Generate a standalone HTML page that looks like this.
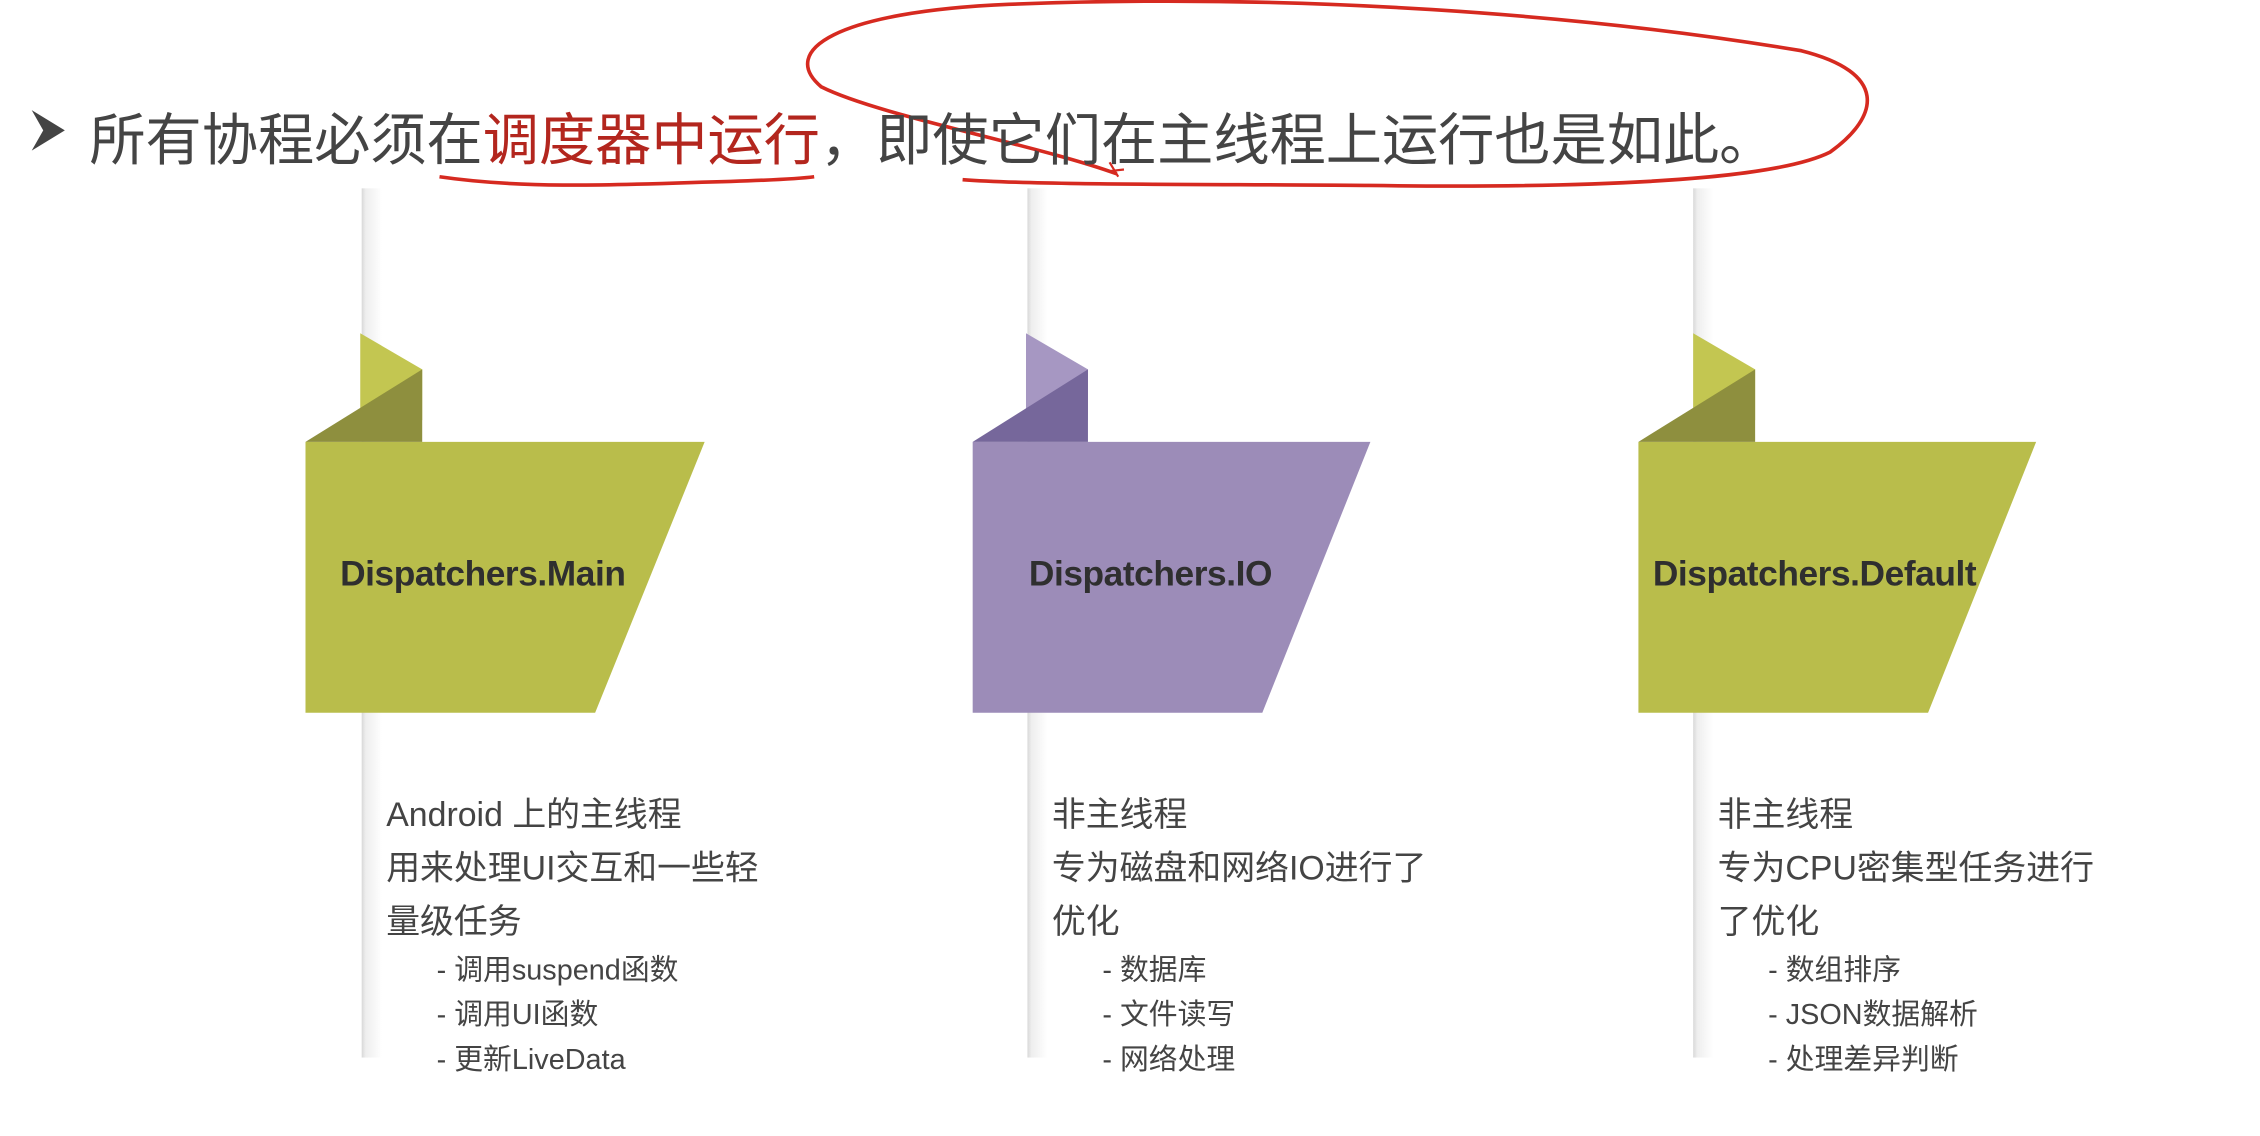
<!DOCTYPE html>
<html><head><meta charset="utf-8"><style>
html,body{margin:0;padding:0;background:#fff;overflow:hidden;width:2260px;height:1136px}
#s{position:absolute;left:0;top:0;width:1570px;height:784px;transform:scale(1.441,1.4487);transform-origin:0 0;font-family:"Liberation Sans","Noto Sans CJK SC",sans-serif}
.t{position:absolute;left:62px;top:66px;font-size:39px;color:#444;white-space:nowrap;letter-spacing:0}
.r{color:#b3261e}
.vl{position:absolute;top:130px;width:14px;height:600px;background:linear-gradient(90deg,#d8d8d8 0,#eee 20%,#fff 100%)}
.lab{position:absolute;top:383px;font-size:24.5px;font-weight:bold;color:#2f2f2f;white-space:nowrap;letter-spacing:-0.3px}
.d{position:absolute;font-size:23.5px;color:#444;line-height:37px;white-space:nowrap}
.d .b{font-size:20px;line-height:31px;padding-left:35px;color:#444}
</style></head><body><div id="s">
<div class="vl" style="left:251px"></div>
<div class="vl" style="left:713px"></div>
<div class="vl" style="left:1175px"></div>
<svg style="position:absolute;left:0;top:0" width="1570" height="784">
<g>
<polygon points="212,305 489,305 413,492 212,492" fill="#b9bd4b"/>
<polygon points="250,230 293,255 293,290 250,300" fill="#c3c651"/>
<polygon points="212,305 293,255 293,305" fill="#8e8f3e"/>
</g>
<g>
<polygon points="675,305 951,305 876,492 675,492" fill="#9c8cb8"/>
<polygon points="712,230 755,255 755,290 712,300" fill="#a697c2"/>
<polygon points="675,305 755,255 755,305" fill="#76679b"/>
</g>
<g>
<polygon points="1137,305 1413,305 1338,492 1137,492" fill="#b9bd4b"/>
<polygon points="1175,230 1218,255 1218,290 1175,300" fill="#c3c651"/>
<polygon points="1137,305 1218,255 1218,305" fill="#8e8f3e"/>
</g>
<polygon points="22,76 45,90 22,104 30,90" fill="#444"/>
<path d="M305,122 C360,130 420,128 480,126 C520,125 550,124 565,122" fill="none" stroke="#d62a20" stroke-width="2.5"/>
<path d="M775,120 C720,100 610,80 570,60 C540,35 580,8 700,3 C900,-5 1100,10 1250,35 C1310,50 1305,80 1270,105 C1230,125 1100,130 950,128 C850,127 720,128 668,124" fill="none" stroke="#d62a20" stroke-width="2.5"/>
<path d="M770,112 L776,122 M771,118 L780,117" stroke="#d62a20" stroke-width="1.5"/>
</svg>
<div class="t">所有协程必须在<span class="r">调度器中运行</span>，即使它们在主线程上运行也是如此。</div>
<div class="lab" style="left:236px">Dispatchers.Main</div>
<div class="lab" style="left:714px">Dispatchers.IO</div>
<div class="lab" style="left:1147px">Dispatchers.Default</div>
<div class="d" style="left:268px;top:544px">Android 上的主线程<br>用来处理UI交互和一些轻<br>量级任务<div class="b">- 调用suspend函数<br>- 调用UI函数<br>- 更新LiveData</div></div>
<div class="d" style="left:730px;top:544px">非主线程<br>专为磁盘和网络IO进行了<br>优化<div class="b">- 数据库<br>- 文件读写<br>- 网络处理</div></div>
<div class="d" style="left:1192px;top:544px">非主线程<br>专为CPU密集型任务进行<br>了优化<div class="b">- 数组排序<br>- JSON数据解析<br>- 处理差异判断</div></div>
</div></body></html>
